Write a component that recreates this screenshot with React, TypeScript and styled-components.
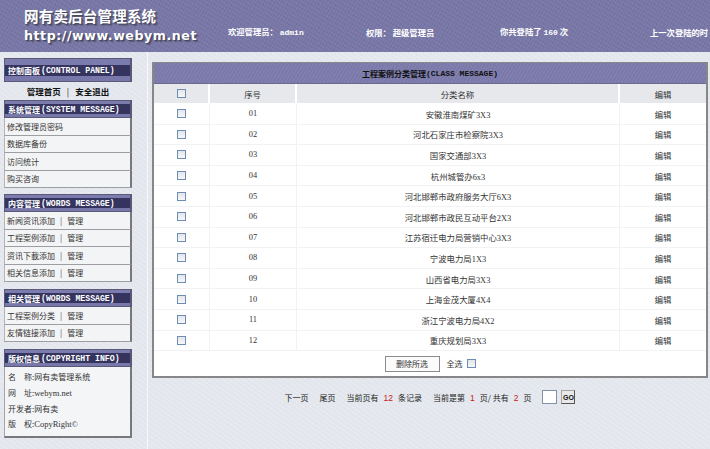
import React from "react";
import styled, { createGlobalStyle } from "styled-components";

const GlobalStyle = createGlobalStyle`
  html, body { margin: 0; padding: 0; }
  body {
    width: 710px;
    height: 449px;
    overflow: hidden;
    background: #e4e8ee;
    font-family: "Liberation Serif", "Noto Sans CJK SC", serif;
    color: #222;
  }
`;

const Page = styled.div`
  width: 710px;
  height: 449px;
  display: flex;
  flex-direction: column;
  background:
    repeating-linear-gradient(35deg, rgba(255,255,255,0.18) 0 1px, transparent 1px 4px),
    #e3e7ed;
`;

const Header = styled.header`
  height: 52px;
  flex-shrink: 0;
  display: flex;
  background:
    repeating-linear-gradient(120deg, rgba(255,255,255,0.05) 0 1px, transparent 1px 3px),
    repeating-linear-gradient(30deg, rgba(0,0,0,0.05) 0 1px, transparent 1px 4px),
    #7877a7;
  color: #fff;
  overflow: hidden;
`;

const Brand = styled.div`
  width: 228px;
  flex-shrink: 0;
  box-sizing: border-box;
  padding: 7px 0 0 24px;
  display: flex;
  flex-direction: column;
`;

const BrandTitle = styled.div`
  font-family: "Noto Sans CJK SC", sans-serif;
  font-weight: 700;
  font-size: 14.5px;
  line-height: 18px;
  letter-spacing: 0.2px;
  color: #fff;
  text-shadow: 1px 1px 0 #4a4a66, 2px 2px 1px #55556e;
  white-space: nowrap;
`;

const BrandUrl = styled.div`
  margin-top: 3px;
  font-family: "DejaVu Sans", sans-serif;
  font-weight: 700;
  font-size: 12.6px;
  line-height: 16px;
  letter-spacing: 0.55px;
  color: #fff;
  text-shadow: 1px 1px 0 #4a4a66, 2px 2px 1px #55556e;
  white-space: nowrap;
`;

const InfoBar = styled.div`
  display: flex;
  align-items: center;
  padding-top: 25px;
  height: 14px;
  white-space: nowrap;
`;

const InfoCell = styled.div<{ $w: number }>`
  width: ${(p) => p.$w}px;
  flex-shrink: 0;
  font-family: "Noto Sans CJK SC", sans-serif;
  font-weight: 700;
  font-size: 8.3px;
  line-height: 14px;
  color: #fff;
`;

const Mono = styled.span`
  font-family: "Liberation Mono", monospace;
  font-weight: 700;
  font-size: 8px;
`;

const Body = styled.div`
  flex: 1;
  display: flex;
  min-height: 0;
`;

const Sidebar = styled.aside`
  width: 148px;
  flex-shrink: 0;
  box-sizing: border-box;
  padding: 6px 15px 0 4px;
  border-right: 1px solid #f6f8fb;
  display: flex;
  flex-direction: column;
`;

const Section = styled.section<{ $gap?: number }>`
  margin-top: ${(p) => p.$gap ?? 0}px;
  display: flex;
  flex-direction: column;
`;

const SectionHead = styled.div<{ $top: number; $band: number; $bottom: number }>`
  height: ${(p) => p.$top + p.$band + p.$bottom}px;
  box-sizing: border-box;
  border: 1px solid #5a5a78;
  border-right-width: 2px;
  background: linear-gradient(
    to bottom,
    #7c7bae 0 ${(p) => p.$top - 1}px,
    #34345f ${(p) => p.$top - 1}px ${(p) => p.$top + p.$band - 1}px,
    #7877a9 ${(p) => p.$top + p.$band - 1}px
  );
  display: flex;
  align-items: flex-start;
  padding: ${(p) => p.$top - 1}px 0 0 3px;
  color: #fff;
  white-space: nowrap;
`;

const HeadCn = styled.span`
  font-family: "Noto Sans CJK SC", sans-serif;
  font-weight: 700;
  font-size: 8px;
  line-height: 11px;
`;

const HeadEn = styled.span`
  font-family: "Liberation Mono", monospace;
  font-weight: 700;
  font-size: 8.2px;
  line-height: 11px;
  margin-left: 1px;
`;

const QuickLinks = styled.div`
  height: 18px;
  display: flex;
  align-items: center;
  justify-content: center;
  font-family: "Noto Sans CJK SC", sans-serif;
  font-weight: 700;
  font-size: 8.5px;
  color: #111;
  white-space: nowrap;
`;

const Sep = styled.span`
  margin: 0 6px;
  font-weight: 400;
`;

const MenuItem = styled.div`
  height: 17.5px;
  box-sizing: border-box;
  background: #f3f4f5;
  border-left: 1px solid #b5b5b8;
  border-right: 2px solid #77777c;
  border-bottom: 1px solid #9d9da2;
  display: flex;
  align-items: center;
  padding-left: 2px;
  font-family: "Noto Sans CJK SC", sans-serif;
  font-size: 8px;
  color: #333;
  white-space: nowrap;
`;

const ItemSep = styled.span`
  margin: 0 5px;
  color: #555;
`;

const InfoBox = styled.div`
  background: #f4f5f6;
  border-left: 1px solid #a5a5a9;
  border-right: 2px solid #77777c;
  border-bottom: 2px solid #77777c;
  padding: 2px 0 4px 3px;
  display: flex;
  flex-direction: column;
`;

const InfoLine = styled.div`
  height: 15.7px;
  display: flex;
  align-items: center;
  font-family: "Noto Sans CJK SC", sans-serif;
  font-size: 8px;
  color: #333;
  white-space: nowrap;
`;

const SerifText = styled.span`
  font-family: "Liberation Serif", serif;
  font-size: 8.5px;
`;

const Main = styled.main`
  flex: 1;
  box-sizing: border-box;
  padding: 10px 2px 0 4px;
  display: flex;
  flex-direction: column;
`;

const Panel = styled.div`
  border: 2px solid #878789;
  border-top-width: 1px;
  background: #fff;
  display: flex;
  flex-direction: column;
`;

const PanelTitle = styled.div`
  height: 21px;
  box-sizing: border-box;
  border-bottom: 1px solid #6a6a8e;
  background:
    repeating-linear-gradient(120deg, rgba(255,255,255,0.06) 0 1px, transparent 1px 3px),
    #7a79aa;
  display: flex;
  align-items: center;
  justify-content: center;
  color: #111;
  white-space: nowrap;
`;

const TitleCn = styled.span`
  font-family: "Noto Sans CJK SC", sans-serif;
  font-weight: 700;
  font-size: 8px;
`;

const TitleEn = styled.span`
  font-family: "Liberation Mono", monospace;
  font-weight: 700;
  font-size: 8px;
`;

const Row = styled.div<{ $head?: boolean }>`
  display: grid;
  grid-template-columns: 56px 87px 1fr 86px;
  height: ${(p) => (p.$head ? 20 : 20.6)}px;
  background: ${(p) => (p.$head ? "#e6e8ec" : "#fff")};
  border-bottom: 1px solid ${(p) => (p.$head ? "#fff" : "#f1f2f4")};
  box-sizing: border-box;
`;

const Cell = styled.div<{ $head?: boolean }>`
  display: flex;
  align-items: center;
  justify-content: center;
  border-right: ${(p) => (p.$head ? "2px solid #fff" : "1px solid #f1f2f4")};
  font-family: "Liberation Serif", "Noto Sans CJK SC", serif;
  font-size: 8.4px;
  color: #333;
  white-space: nowrap;
  &:last-child { border-right: none; }
`;

const CnCell = styled(Cell)`
  font-family: "Noto Sans CJK SC", sans-serif;
`;

const Box = styled.span`
  display: inline-block;
  width: 9px;
  height: 9px;
  box-sizing: border-box;
  border: 1px solid #6d8db5;
  background: linear-gradient(#e4e6e9, #f7f7f8);
`;

const FooterRow = styled.div`
  height: 25px;
  display: flex;
  align-items: center;
  justify-content: center;
  font-family: "Noto Sans CJK SC", sans-serif;
  font-size: 8px;
  color: #333;
`;

const DelButton = styled.button`
  width: 55px;
  height: 16px;
  padding: 0;
  border: 1px solid #8b8b8e;
  background: #fbfbfb;
  font-family: "Noto Sans CJK SC", sans-serif;
  font-size: 8px;
  color: #333;
  margin-right: 7px;
`;

const SelectAll = styled.span`
  margin-right: 4px;
`;

const Pager = styled.div`
  margin-top: 12px;
  display: flex;
  align-items: center;
  justify-content: center;
  gap: 11px;
  font-family: "Noto Sans CJK SC", sans-serif;
  font-size: 8px;
  color: #222;
  white-space: nowrap;
`;

const Red = styled.span`
  color: #c41a1a;
  font-family: "Liberation Sans", sans-serif;
  font-size: 8.5px;
  margin: 0 5px;
`;

const PageInput = styled.span`
  display: inline-block;
  width: 15px;
  height: 14px;
  box-sizing: border-box;
  border: 1px solid #7f92a8;
  background: #fff;
`;

const GoButton = styled.span`
  display: inline-flex;
  align-items: center;
  justify-content: center;
  width: 14px;
  height: 14px;
  box-sizing: border-box;
  border: 1px solid #a5a5a5;
  border-right-color: #555;
  border-bottom-color: #555;
  background: #e9e9e9;
  font-family: "Liberation Sans", sans-serif;
  font-weight: 700;
  font-size: 7px;
  color: #111;
  margin-left: -7px;
`;

const rows: [string, string][] = [
  ["01", "安徽淮南煤矿3X3"],
  ["02", "河北石家庄市检察院3X3"],
  ["03", "国家交通部3X3"],
  ["04", "杭州城管办6x3"],
  ["05", "河北邯郸市政府服务大厅6X3"],
  ["06", "河北邯郸市政民互动平台2X3"],
  ["07", "江苏宿迁电力局营销中心3X3"],
  ["08", "宁波电力局1X3"],
  ["09", "山西省电力局3X3"],
  ["10", "上海金茂大厦4X4"],
  ["11", "浙江宁波电力局4X2"],
  ["12", "重庆规划局3X3"],
];

const Head = ({ cn, en, tall }: { cn: string; en: string; tall?: boolean }) => (
  <SectionHead $top={tall ? 7 : 4} $band={tall ? 11 : 10} $bottom={tall ? 6 : 4}>
    <HeadCn>{cn}</HeadCn>
    <HeadEn>{en}</HeadEn>
  </SectionHead>
);

export default function App() {
  return (
    <Page>
      <GlobalStyle />
      <Header>
        <Brand>
          <BrandTitle>网有卖后台管理系统</BrandTitle>
          <BrandUrl>http://www.webym.net</BrandUrl>
        </Brand>
        <InfoBar>
          <InfoCell $w={138}>
            欢迎管理员： <Mono>admin</Mono>
          </InfoCell>
          <InfoCell $w={134}>权限： 超级管理员</InfoCell>
          <InfoCell $w={150}>
            你共登陆了 <Mono>160</Mono> 次
          </InfoCell>
          <InfoCell $w={60}>上一次登陆的时</InfoCell>
        </InfoBar>
      </Header>
      <Body>
        <Sidebar>
          <Section>
            <Head cn="控制面板" en="(CONTROL PANEL)" tall />
            <QuickLinks>
              管理首页<Sep>|</Sep>安全退出
            </QuickLinks>
          </Section>
          <Section>
            <Head cn="系统管理" en="(SYSTEM MESSAGE)" />
            <MenuItem>修改管理员密码</MenuItem>
            <MenuItem>数据库备份</MenuItem>
            <MenuItem>访问统计</MenuItem>
            <MenuItem>购买咨询</MenuItem>
          </Section>
          <Section $gap={6}>
            <Head cn="内容管理" en="(WORDS MESSAGE)" />
            <MenuItem>新闻资讯添加<ItemSep>|</ItemSep>管理</MenuItem>
            <MenuItem>工程案例添加<ItemSep>|</ItemSep>管理</MenuItem>
            <MenuItem>资讯下載添加<ItemSep>|</ItemSep>管理</MenuItem>
            <MenuItem>相关信息添加<ItemSep>|</ItemSep>管理</MenuItem>
          </Section>
          <Section $gap={7}>
            <Head cn="相关管理" en="(WORDS MESSAGE)" />
            <MenuItem>工程案例分类<ItemSep>|</ItemSep>管理</MenuItem>
            <MenuItem>友情链接添加<ItemSep>|</ItemSep>管理</MenuItem>
          </Section>
          <Section $gap={7}>
            <Head cn="版权信息" en="(COPYRIGHT INFO)" />
            <InfoBox>
              <InfoLine>名　称:网有卖管理系统</InfoLine>
              <InfoLine>网　址:<SerifText>webym.net</SerifText></InfoLine>
              <InfoLine>开发者:网有卖</InfoLine>
              <InfoLine>版　权:<SerifText>CopyRight©</SerifText></InfoLine>
            </InfoBox>
          </Section>
        </Sidebar>
        <Main>
          <Panel>
            <PanelTitle>
              <TitleCn>工程案例分类管理</TitleCn>
              <TitleEn>(CLASS MESSAGE)</TitleEn>
            </PanelTitle>
            <Row $head>
              <Cell $head><Box /></Cell>
              <CnCell $head>序号</CnCell>
              <CnCell $head>分类名称</CnCell>
              <CnCell $head>编辑</CnCell>
            </Row>
            {rows.map(([no, name]) => (
              <Row key={no}>
                <Cell><Box /></Cell>
                <Cell>{no}</Cell>
                <Cell>{name}</Cell>
                <CnCell>编辑</CnCell>
              </Row>
            ))}
            <FooterRow>
              <DelButton>删除所选</DelButton>
              <SelectAll>全选</SelectAll>
              <Box />
            </FooterRow>
          </Panel>
          <Pager>
            <span>下一页</span>
            <span>尾页</span>
            <span>当前页有<Red>12</Red>条记录</span>
            <span>当前是第<Red>1</Red>页/ 共有<Red>2</Red>页</span>
            <PageInput />
            <GoButton>GO</GoButton>
          </Pager>
        </Main>
      </Body>
    </Page>
  );
}
